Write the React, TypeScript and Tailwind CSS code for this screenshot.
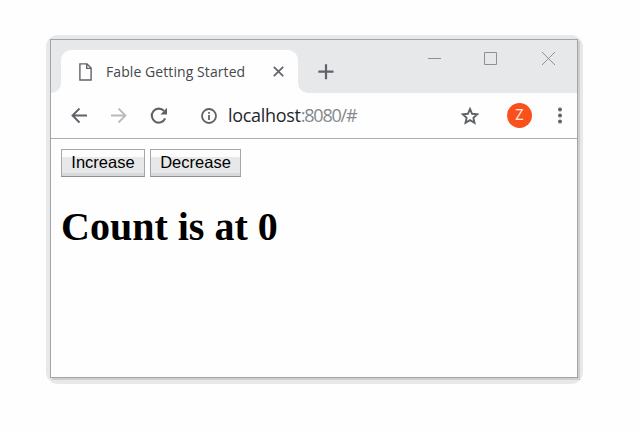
import React, { useState } from 'react';

function PageIcon() {
  return (
    <svg className="h-[18px] w-[13px] shrink-0" viewBox="0 0 13 18" fill="none" stroke="#5f6368" strokeWidth="1.4">
      <path d="M.9.9H8l4.1 4.1v12H.9zM7.7 1v4.4H12" />
    </svg>
  );
}

function Tab() {
  return (
    <div className="relative ml-[10px] mt-[10px] flex h-[43px] w-[237px] items-center rounded-t-[10px] bg-[#fefefe] pl-[18px] pr-[14px]">
      <svg className="absolute bottom-0 -left-[10px] h-[10px] w-[10px]" viewBox="0 0 10 10">
        <path d="M10 0v10H0A10 10 0 0 0 10 0" fill="#fefefe" />
      </svg>
      <svg className="absolute bottom-0 -right-[10px] h-[10px] w-[10px]" viewBox="0 0 10 10">
        <path d="M0 0v10h10A10 10 0 0 1 0 0" fill="#fefefe" />
      </svg>
      <PageIcon />
      <span className="ml-[14px] whitespace-nowrap font-['Open_Sans',sans-serif] text-[14px] tracking-[0.08px] text-[#45484c]">
        Fable Getting Started
      </span>
      <svg className="ml-auto h-[11px] w-[11px] shrink-0" viewBox="0 0 11 11" stroke="#5f6368" strokeWidth="1.7">
        <path d="M.8.8l9.4 9.4M10.2.8L.8 10.2" />
      </svg>
    </div>
  );
}

function TitleBar() {
  return (
    <div className="flex h-[53px] bg-[#e7e8ea]">
      <Tab />
      <svg className="ml-[20px] mt-[24px] h-[16px] w-[16px]" viewBox="0 0 16 16" stroke="#5f6368" strokeWidth="2.2">
        <path d="M8 .3v15M.3 7.7h15.2" />
      </svg>
      <div className="ml-auto mr-[22px] mt-[11px] flex h-[14px] items-center gap-[43px]">
        <svg className="h-[13px] w-[13px]" viewBox="0 0 13 13" stroke="#8f9092"><path d="M0 6.5h13" /></svg>
        <svg className="h-[13px] w-[13px]" viewBox="0 0 13 13" fill="none" stroke="#8f9092"><path d="M.5.5h12v12H.5z" /></svg>
        <svg className="ml-[2px] h-[13px] w-[13px]" viewBox="0 0 13 13" stroke="#8f9092"><path d="M0 0l13 13M13 0L0 13" /></svg>
      </div>
    </div>
  );
}

function Toolbar() {
  return (
    <div className="flex h-[46px] items-center border-b border-[#acacac] bg-[#fefefe] pl-[20px] pr-[15px]">
      <svg className="h-[16px] w-[16px]" viewBox="0 0 16 16" fill="none" stroke="#5f6368" strokeWidth="1.9">
        <path d="M16 7.5H1.5M8.5.5l-7 7 7 7" />
      </svg>
      <svg className="ml-[24px] h-[16px] w-[16px]" viewBox="0 0 16 16" fill="none" stroke="#b9babc" strokeWidth="1.8">
        <path d="M0 7.5h14.5M7.5.5l7 7-7 7" />
      </svg>
      <svg className="ml-[23px] h-[18px] w-[18px]" viewBox="0 0 18 18">
        <path d="M15.2 11.4A7 7 0 1 1 14 3.9" fill="none" stroke="#5f6368" strokeWidth="2.1" />
        <path d="M17 .8v6.6h-6.6z" fill="#5f6368" />
      </svg>
      <svg className="ml-[33px] h-[16px] w-[16px]" viewBox="0 0 16 16" fill="none" stroke="#5f6368" strokeWidth="1.8">
        <circle cx="8" cy="8" r="7" />
        <path d="M8 7v5M8 4v1.8" />
      </svg>
      <span className="ml-[11px] whitespace-nowrap font-['Open_Sans',sans-serif] text-[18px] tracking-[-1.2px] text-[#85898d]">
        <span className="tracking-[-0.3px] text-[#24272b]">localhost</span>:8080/#
      </span>
      <svg className="ml-auto h-[18px] w-[18px]" viewBox="0 0 18 18" fill="none" stroke="#5f6368" strokeWidth="1.9">
        <path d="M9 2l2.1 4.8 5.2.5-3.9 3.5 1.1 5.1L9 13.2l-4.5 2.7 1.1-5.1-3.9-3.5 5.2-.5z" />
      </svg>
      <div className="ml-[28px] flex h-[25px] w-[25px] items-center justify-center rounded-full bg-[#f9501c] font-['Roboto',sans-serif] text-[14px] text-[#ffe9e2]">
        Z
      </div>
      <svg className="ml-[26px] h-[18px] w-[4px]" viewBox="0 0 4 18" fill="#5f6368">
        <circle cx="2" cy="2.5" r="2" /><circle cx="2" cy="8.5" r="2" /><circle cx="2" cy="14.5" r="2" />
      </svg>
    </div>
  );
}

const buttonClass =
  "h-[28px] whitespace-nowrap border border-[#a6a6a6] border-b-[#8f8f8f] bg-[linear-gradient(#fdfdfd_0_7px,#e7e8ea_7px_23px,#d8d9da_23px)] pb-[2px] text-center font-['Liberation_Sans',sans-serif] text-[16.5px] leading-[24px] text-black";

export default function App() {
  const [count, setCount] = useState(0);
  return (
    <div className="h-[430px] w-[639px] overflow-hidden bg-[#fefefe] pl-[46px] pt-[35px]">
      <div className="h-[349px] w-[537px] rounded-[12px] bg-[#e7e8ea] pl-[4px] pt-[4px]">
        <div className="h-[339px] w-[528px] border border-[#a3a4a5] bg-[#fefefe] shadow-[2px_2px_0_#cfcfd0]">
          <TitleBar />
          <Toolbar />
          <main className="px-[10px] pt-[10px]">
            <div className="flex gap-[5px]">
              <button className={`${buttonClass} w-[84px]`} onClick={() => setCount(count + 1)}>Increase</button>
              <button className={`${buttonClass} w-[91px]`} onClick={() => setCount(count - 1)}>Decrease</button>
            </div>
            <h1 className="mt-[27px] whitespace-nowrap font-['Liberation_Serif',serif] text-[40px] font-bold leading-[46px] text-black">
              Count is at {count}
            </h1>
          </main>
        </div>
      </div>
    </div>
  );
}
